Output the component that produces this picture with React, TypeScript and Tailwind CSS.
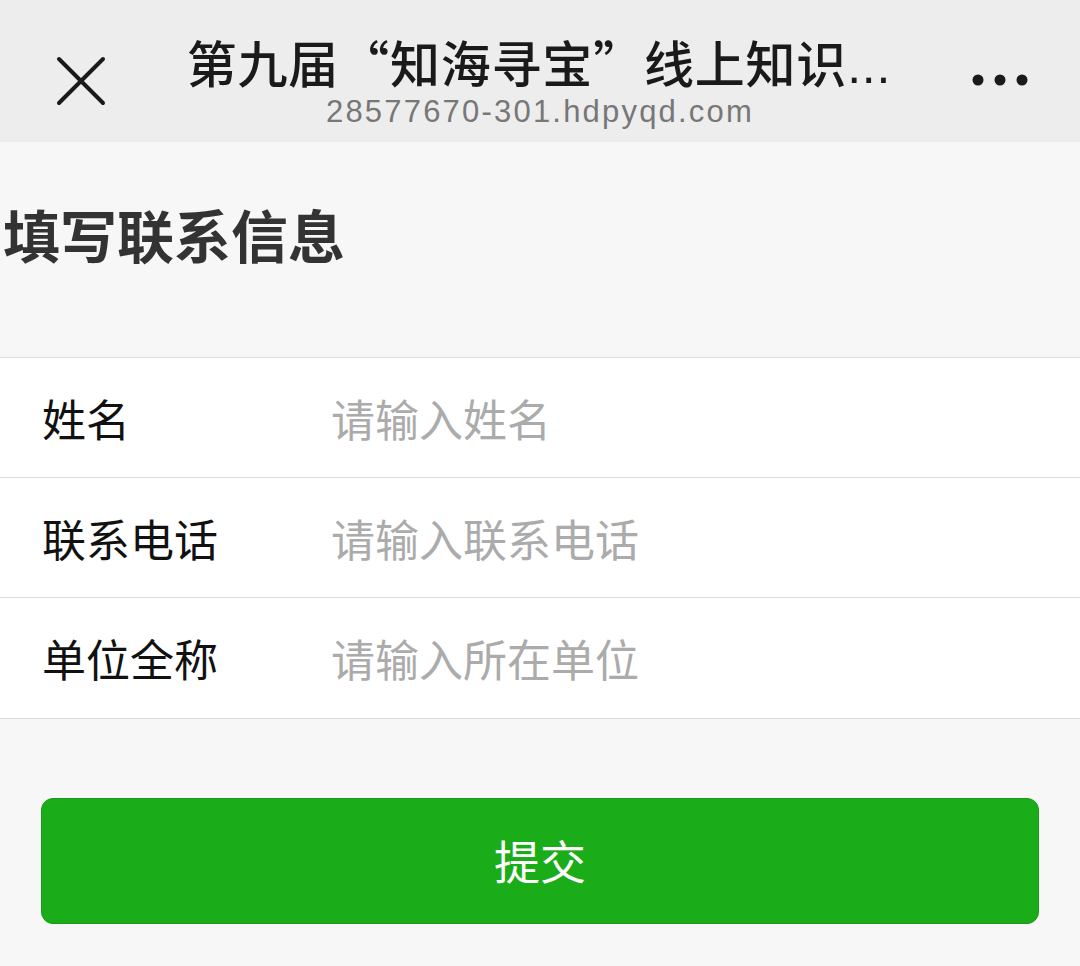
import React from "react";

const cjk = { fontFamily: '"Noto Sans CJK SC", "Noto Sans", sans-serif' };

function Row({ label, placeholder, last }: { label: string; placeholder: string; last?: boolean }) {
  return (
    <div className={`flex h-[120px] items-center bg-white ${last ? "" : "border-b border-[#dcdcdc]"}`}>
      <div className="w-[331px] pl-[42px] text-[44px] text-[#111]">{label}</div>
      <div className="text-[44px] text-[#ababab]">{placeholder}</div>
    </div>
  );
}

export default function App() {
  return (
    <div className="h-[966px] w-[1080px] overflow-hidden bg-[#f7f7f7]" style={cjk}>
      <div className="relative flex h-[142px] flex-col items-center bg-[#ededed]">
        <svg className="absolute left-[56px] top-[56px]" width="50" height="50" viewBox="0 0 50 50">
          <path d="M3 3 L47 47 M47 3 L3 47" stroke="#1a1a1a" strokeWidth="4" strokeLinecap="round" />
        </svg>
        <svg className="absolute left-[970px] top-[72px]" width="60" height="16" viewBox="0 0 60 16">
          <circle cx="8" cy="8" r="5.5" fill="#1a1a1a" />
          <circle cx="30" cy="8" r="5.5" fill="#1a1a1a" />
          <circle cx="52" cy="8" r="5.5" fill="#1a1a1a" />
        </svg>
        <div className="ml-[-2px] mt-[29px] h-[64px] text-[50px] font-medium leading-[64px] tracking-[0.8px] text-[#1a1a1a]">
          第九届“知海寻宝”线上知识<span style={{ fontFamily: '"Liberation Sans", Arial, sans-serif' }}>...</span>
        </div>
        <div
          className="mt-[1px] text-[31px] leading-[36px] tracking-[2.2px] text-[#777]"
          style={{ fontFamily: '"Liberation Sans", Arial, sans-serif' }}
        >
          28577670-301.hdpyqd.com
        </div>
      </div>
      <div className="flex h-[215px] items-start pl-[3px] pt-[55px]">
        <div className="text-[57px] font-bold leading-[72px] text-[#333]">填写联系信息</div>
      </div>
      <div className="border-y border-[#dcdcdc]">
        <Row label="姓名" placeholder="请输入姓名" />
        <Row label="联系电话" placeholder="请输入联系电话" />
        <Row label="单位全称" placeholder="请输入所在单位" last />
      </div>
      <div className="px-[41px] pt-[79px]">
        <div className="flex h-[126px] items-center justify-center rounded-[12px] border border-[#199a18] bg-[#1aad19] pb-[4px] text-[46px] text-white">
          提交
        </div>
      </div>
    </div>
  );
}
